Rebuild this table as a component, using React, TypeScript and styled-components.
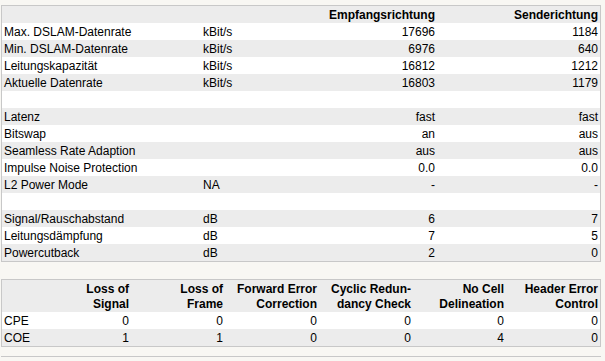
import React from 'react'
import styled, { createGlobalStyle } from 'styled-components'

const GlobalStyle = createGlobalStyle`
    html, body {
        margin: 0;
        padding: 0;
        background: #f8f7f3;
    }
    body {
        font-family: 'Liberation Sans', Arial, sans-serif;
        font-size: 12px;
        color: #000;
    }
`

const Page = styled.div`
    display: flex;
    flex-direction: column;
    gap: 17px;
    padding: 5px 4px 0 1px;
    height: 361px;
    box-sizing: border-box;
    overflow: hidden;
`

const Box = styled.div`
    border: 1px solid #c8c8c8;
    background: #fff;
    flex-shrink: 0;
`

const Table = styled.table`
    width: 100%;
    border-collapse: collapse;
    table-layout: fixed;
`

const Row = styled.tr`
    background: #fff;
    &:nth-child(odd) {
        background: #ececec;
    }
`

const HeadRow = styled.tr`
    background: #ececec;
`

const Cell = styled.td<{ $right?: boolean }>`
    padding: 2px 2px 0;
    line-height: 15px;
    height: 15px;
    white-space: nowrap;
    text-align: ${p => (p.$right ? 'right' : 'left')};
    vertical-align: top;
`

const HeadCell = styled.th<{ $right?: boolean }>`
    padding: 2px 2px 0;
    line-height: 15px;
    height: 15px;
    font-weight: bold;
    text-align: ${p => (p.$right ? 'right' : 'left')};
    vertical-align: top;
`

const NextBox = styled.div`
    border-top: 1px solid #c8c8c8;
    height: 20px;
    flex-shrink: 0;
    margin-top: -8px;
`

type LineRow = [string, string, string, string] | null

const lineRows: LineRow[] = [
    ['Max. DSLAM-Datenrate', 'kBit/s', '17696', '1184'],
    ['Min. DSLAM-Datenrate', 'kBit/s', '6976', '640'],
    ['Leitungskapazität', 'kBit/s', '16812', '1212'],
    ['Aktuelle Datenrate', 'kBit/s', '16803', '1179'],
    null,
    ['Latenz', '', 'fast', 'fast'],
    ['Bitswap', '', 'an', 'aus'],
    ['Seamless Rate Adaption', '', 'aus', 'aus'],
    ['Impulse Noise Protection', '', '0.0', '0.0'],
    ['L2 Power Mode', 'NA', '-', '-'],
    null,
    ['Signal/Rauschabstand', 'dB', '6', '7'],
    ['Leitungsdämpfung', 'dB', '7', '5'],
    ['Powercutback', 'dB', '2', '0']
]

const errorHeads = [
    ['Loss of', 'Signal'],
    ['Loss of', 'Frame'],
    ['Forward Error', 'Correction'],
    ['Cyclic Redun-', 'dancy Check'],
    ['No Cell', 'Delineation'],
    ['Header Error', 'Control']
]

const errorRows: [string, number[]][] = [
    ['CPE', [0, 0, 0, 0, 0, 0]],
    ['COE', [1, 1, 0, 0, 4, 0]]
]

const LineTable = () => (
    <Box>
        <Table>
            <colgroup>
                <col style={{ width: 199 }} />
                <col style={{ width: 100 }} />
                <col style={{ width: 136 }} />
                <col />
            </colgroup>
            <tbody>
                <HeadRow>
                    <HeadCell />
                    <HeadCell />
                    <HeadCell $right>Empfangsrichtung</HeadCell>
                    <HeadCell $right>Senderichtung</HeadCell>
                </HeadRow>
                {lineRows.map((r, i) =>
                    r ? (
                        <Row key={i}>
                            <Cell>{r[0]}</Cell>
                            <Cell>{r[1]}</Cell>
                            <Cell $right>{r[2]}</Cell>
                            <Cell $right>{r[3]}</Cell>
                        </Row>
                    ) : (
                        <Row key={i}>
                            <Cell colSpan={4} />
                        </Row>
                    )
                )}
            </tbody>
        </Table>
    </Box>
)

const ErrorTable = () => (
    <Box>
        <Table>
            <colgroup>
                <col style={{ width: 35 }} />
                <col style={{ width: 94 }} />
                <col style={{ width: 94 }} />
                <col style={{ width: 94 }} />
                <col style={{ width: 94 }} />
                <col style={{ width: 93 }} />
                <col />
            </colgroup>
            <tbody>
                <HeadRow>
                    <HeadCell />
                    {errorHeads.map(h => (
                        <HeadCell key={h[0] + h[1]} $right>
                            {h[0]}
                            <br />
                            {h[1]}
                        </HeadCell>
                    ))}
                </HeadRow>
                {errorRows.map(([name, vals]) => (
                    <Row key={name}>
                        <Cell>{name}</Cell>
                        {vals.map((v, i) => (
                            <Cell key={i} $right>
                                {v}
                            </Cell>
                        ))}
                    </Row>
                ))}
            </tbody>
        </Table>
    </Box>
)

const App = () => (
    <>
        <GlobalStyle />
        <Page>
            <LineTable />
            <ErrorTable />
            <NextBox />
        </Page>
    </>
)

export default App
